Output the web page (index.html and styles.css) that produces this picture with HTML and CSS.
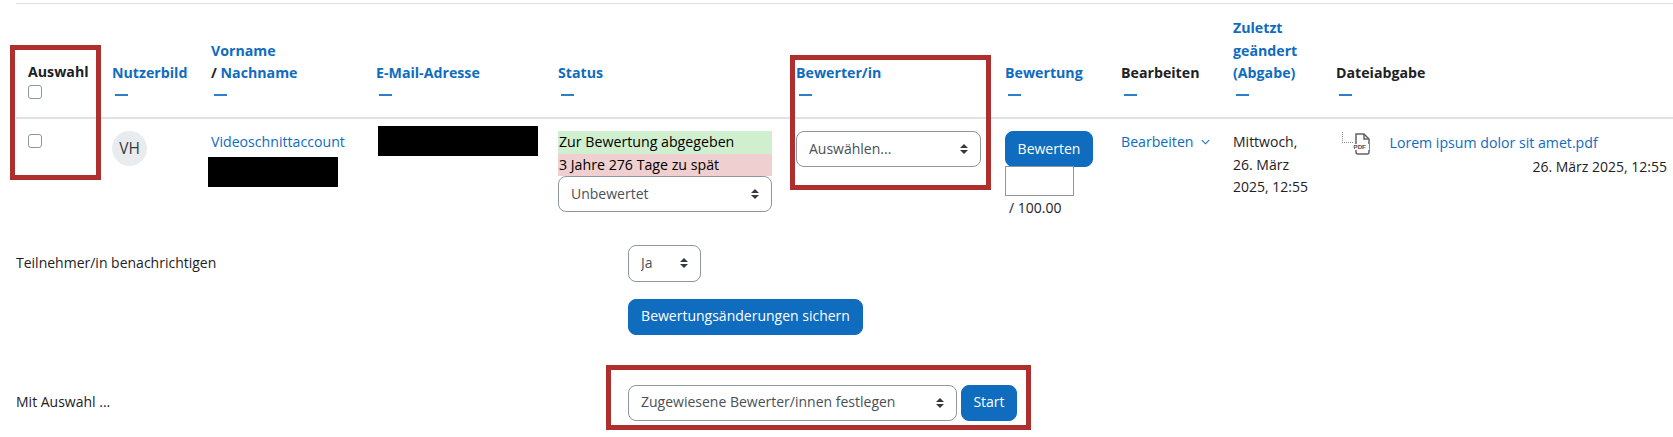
FILE: index.html
```html
<!DOCTYPE html>
<html lang="de">
<head>
<meta charset="utf-8">
<title>Abgaben</title>
<link rel="stylesheet" href="styles.css">
</head>
<body>
<main class="page">
  <div class="table-wrap">
    <table class="grading">
      <colgroup>
        <col class="c1"><col class="c2"><col class="c3"><col class="c4"><col class="c5"><col class="c6"><col class="c7"><col class="c8"><col class="c9"><col class="c10">
      </colgroup>
      <thead>
        <tr>
          <th><span class="plain">Auswahl</span><div class="head-check"><input type="checkbox" class="check" aria-label="Alle auswählen"></div></th>
          <th><a href="#">Nutzerbild</a><span class="dash"></span></th>
          <th><a href="#">Vorname</a><br><span class="plain">/</span> <a href="#">Nachname</a><span class="dash"></span></th>
          <th><a href="#">E-Mail-Adresse</a><span class="dash"></span></th>
          <th><a href="#">Status</a><span class="dash"></span></th>
          <th><a href="#">Bewerter/in</a><span class="dash"></span></th>
          <th><a href="#">Bewertung</a><span class="dash"></span></th>
          <th><span class="plain">Bearbeiten</span><span class="dash"></span></th>
          <th><a href="#">Zuletzt<br>geändert<br>(Abgabe)</a><span class="dash"></span></th>
          <th><span class="plain">Dateiabgabe</span><span class="dash"></span></th>
        </tr>
      </thead>
      <tbody>
        <tr>
          <td><input type="checkbox" class="check check-row" aria-label="Auswählen"></td>
          <td><span class="avatar">VH</span></td>
          <td><a href="#">Videoschnittaccount</a><div class="redact redact-name"></div></td>
          <td><div class="redact redact-mail"></div></td>
          <td>
            <div class="st st-ok">Zur Bewertung abgegeben</div>
            <div class="st st-late">3 Jahre 276 Tage zu spät</div>
            <select class="sel sel-full"><option>Unbewertet</option></select>
          </td>
          <td><select class="sel sel-full"><option>Auswählen...</option></select></td>
          <td>
            <button type="button" class="btn btn-grade">Bewerten</button>
            <input type="text" class="grade-input" aria-label="Bewertung">
            <div class="grade-max">/ 100.00</div>
          </td>
          <td><a href="#" class="edit">Bearbeiten<svg class="chev" viewBox="0 0 10 6" width="9" height="6"><path d="M1 1l4 4 4-4" fill="none" stroke="currentColor" stroke-width="1.2"/></svg></a></td>
          <td>Mittwoch,<br>26. März<br>2025, 12:55</td>
          <td>
            <div class="file">
              <span class="tree"></span>
              <svg class="pdf" viewBox="0 0 18 22" width="18" height="22">
                <path d="M3 1h8l5 5v13a2 2 0 0 1-2 2H5a2 2 0 0 1-2-2z" fill="#fff" stroke="#5f6368" stroke-width="1.5"/>
                <path d="M11 1v5h5" fill="none" stroke="#5f6368" stroke-width="1.5"/>
                <rect x="0" y="11" width="16" height="6" fill="#fff"/>
                <text x="0.5" y="16.4" class="pdf-label">PDF</text>
              </svg>
              <a href="#" class="file-link">Lorem ipsum dolor sit amet.pdf</a>
            </div>
            <div class="file-date">26. März 2025, 12:55</div>
          </td>
        </tr>
      </tbody>
    </table>
  </div>

  <form class="options">
    <div class="opt-row opt-notify">
      <label>Teilnehmer/in benachrichtigen</label>
      <div><select class="sel sel-ja"><option>Ja</option></select></div>
    </div>
    <div class="opt-row opt-save">
      <span></span>
      <div><button type="button" class="btn btn-save">Bewertungsänderungen sichern</button></div>
    </div>
    <div class="opt-row opt-with">
      <label>Mit Auswahl ...</label>
      <div class="with-controls">
        <select class="sel sel-with"><option>Zugewiesene Bewerter/innen festlegen</option></select>
        <button type="button" class="btn btn-start">Start</button>
      </div>
    </div>
  </form>

  <div class="frame frame-a"></div>
  <div class="frame frame-b"></div>
  <div class="frame frame-c"></div>
</main>
</body>
</html>
```
FILE: styles.css
```css
* { box-sizing: border-box; }
html, body { margin: 0; padding: 0; background: #fff; }
body {
  font-family: "Open Sans", "Noto Sans", sans-serif;
  font-size: 14px;
  line-height: 22.5px;
  color: #1d2125;
  overflow: hidden;
}
a { color: #0f6cbf; text-decoration: none; }

.page { position: relative; width: 1673px; height: 437px; overflow: hidden; padding-top: 3px; }
.table-wrap { margin-left: 16px; width: 1657px; overflow: hidden; }

.grading { border-collapse: collapse; table-layout: fixed; width: 1663px; border-top: 1px solid #dee2e6; }
.c1 { width: 84px; } .c2 { width: 99px; } .c3 { width: 165px; } .c4 { width: 182px; } .c5 { width: 238px; }
.c6 { width: 209px; } .c7 { width: 116px; } .c8 { width: 112px; } .c9 { width: 103px; } .c10 { width: 355px; }

.grading th {
  padding: 13px 12px 10px;
  text-align: left;
  vertical-align: bottom;
  font-size: 14.2px;
  font-weight: 700;
  border-bottom: 2px solid #dee2e6;
  white-space: nowrap;
}
.plain { color: #1d2125; }
.dash { display: block; width: 13px; height: 2px; margin: 9px 0 11.5px 3px; background: #2f7fc8; }
.head-check { height: 22.5px; line-height: 0; padding-top: 1px; margin-bottom: 1px; }

.check {
  appearance: none;
  display: block;
  width: 14px;
  height: 14px;
  margin: 0;
  background: #fff;
  border: 1px solid #8f959e;
  border-radius: 3px;
}
.check-row { margin-top: 3px; }

.grading td { padding: 12px; vertical-align: top; }
.grading td a { font-size: 14.15px; }

.avatar {
  display: flex;
  align-items: center;
  justify-content: center;
  width: 35px;
  height: 35px;
  border-radius: 50%;
  background: #e9ecef;
  color: #343a40;
  font-size: 15.5px;
}

.redact { background: #000; height: 30px; }
.redact-name { width: 130px; margin: 3px 0 0 -3px; }
.redact-mail { width: 160px; margin: -5px 0 0 2px; }

.st { color: #000; height: 22.5px; padding-left: 1px; font-size: 14.2px; }
.st-ok { background: #cfefcf; }
.st-late { background: #efcfcf; }

.sel {
  appearance: none;
  display: block;
  height: 36px;
  margin: 0;
  padding: 0 32px 0 12px;
  font: inherit;
  color: #495057;
  background: #fff url("data:image/svg+xml,%3csvg xmlns='http://www.w3.org/2000/svg' viewBox='0 0 4 5'%3e%3cpath fill='%23343a40' d='M2 0L0 2h4zm0 5L0 3h4z'/%3e%3c/svg%3e") no-repeat right 12px center / 8px 10px;
  border: 1px solid #8f959e;
  border-radius: 8px;
}
.sel-full { width: 100%; }
.sel-ja { width: 73px; height: 37px; }
.sel-with { width: 329px; }

.btn {
  display: block;
  height: 36px;
  padding: 0;
  font: inherit;
  color: #fff;
  background: #0f6cbf;
  border: 1px solid #0f6cbf;
  border-radius: 8px;
}
.btn-grade { width: 88px; }
.btn-save { width: 235px; }
.btn-start { width: 56px; }

.grade-input {
  display: block;
  width: 69px;
  height: 30px;
  margin: -1px 0 0;
  padding: 0;
  font: inherit;
  background: #fff;
  border: 1px solid #8f959e;
}
.grade-max { padding-left: 4px; margin-top: 1px; }

.edit { display: inline-flex; align-items: center; gap: 7px; white-space: nowrap; }
.chev { display: block; margin-top: -1px; }

.file { display: flex; align-items: flex-start; padding-left: 6px; margin-top: 1px; }
.tree {
  display: block;
  width: 11px;
  height: 11px;
  border-left: 1px dotted #8a8f94;
  border-bottom: 1px dotted #8a8f94;
  flex: none;
}
.pdf { display: block; flex: none; margin-top: 1px; }
.pdf-label { font-family: "Liberation Sans", sans-serif; font-size: 6.2px; font-weight: 700; fill: #4a4f55; }
.file-link { margin-left: 18.5px; white-space: nowrap; }
.file-date { text-align: right; margin-top: 1px; white-space: nowrap; }

.options { display: block; }
.opt-row { display: grid; grid-template-columns: 612px 1fr; align-items: center; padding-left: 16px; }
.opt-notify { margin-top: 13px; }
.opt-save { margin-top: 17px; }
.opt-with { margin-top: 50px; }
.with-controls { display: flex; gap: 4px; }

.frame { position: absolute; border: 5px solid #ae2f2d; }
.frame-a { left: 10px; top: 45px; width: 91px; height: 135px; }
.frame-b { left: 790px; top: 55px; width: 201px; height: 135px; }
.frame-c { left: 606px; top: 365px; width: 425px; height: 65px; }
```
